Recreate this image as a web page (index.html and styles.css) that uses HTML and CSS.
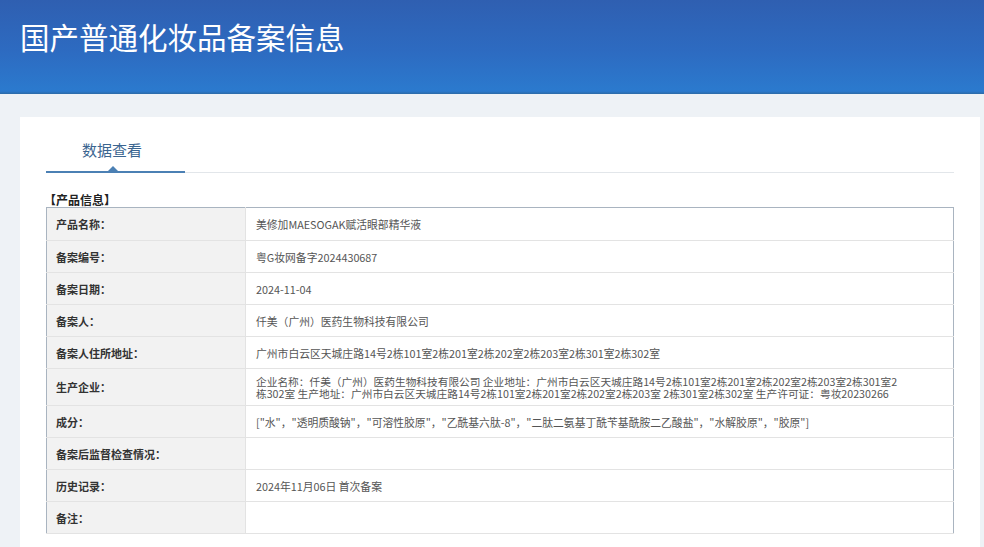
FILE: index.html
```html
<!DOCTYPE html>
<html lang="zh-CN">
<head>
<meta charset="utf-8">
<title>国产普通化妆品备案信息</title>
<link rel="stylesheet" href="styles.css">
</head>
<body>
<header class="banner">
  <h1 class="banner-title">国产普通化妆品备案信息</h1>
</header>
<main class="main">
  <section class="card">
    <div class="tabs">
      <div class="tab active">数据查看<span class="tab-arrow"></span></div>
      <div class="tab-rest"></div>
    </div>
    <h2 class="section-title">【产品信息】</h2>
    <table class="info">
      <tr class="first"><th>产品名称：</th><td>美修加MAESOGAK赋活眼部精华液</td></tr>
      <tr><th>备案编号：</th><td>粤G妆网备字2024430687</td></tr>
      <tr><th>备案日期：</th><td>2024-11-04</td></tr>
      <tr><th>备案人：</th><td>仟美（广州）医药生物科技有限公司</td></tr>
      <tr><th>备案人住所地址：</th><td>广州市白云区天城庄路14号2栋101室2栋201室2栋202室2栋203室2栋301室2栋302室</td></tr>
      <tr class="tall"><th>生产企业：</th><td class="tight">企业名称：仟美（广州）医药生物科技有限公司 企业地址：广州市白云区天城庄路14号2栋101室2栋201室2栋202室2栋203室2栋301室2<br>栋302室 生产地址：广州市白云区天城庄路14号2栋101室2栋201室2栋202室2栋203室 2栋301室2栋302室 生产许可证：粤妆20230266</td></tr>
      <tr><th>成分：</th><td>["水"，"透明质酸钠"，"可溶性胶原"，"乙酰基六肽-8"，"二肽二氨基丁酰苄基酰胺二乙酸盐"，"水解胶原"，"胶原"]</td></tr>
      <tr><th>备案后监督检查情况：</th><td></td></tr>
      <tr><th>历史记录：</th><td>2024年11月06日 首次备案</td></tr>
      <tr><th>备注：</th><td></td></tr>
    </table>
  </section>
</main>
</body>
</html>
```
FILE: styles.css
```css
* { box-sizing: border-box; }
html, body {
  margin: 0;
  padding: 0;
}
body {
  background: #eef2f6;
  font-family: "Noto Sans CJK SC", "Noto Sans", sans-serif;
  color: #333;
  overflow: hidden;
}
.banner {
  height: 94px;
  background: linear-gradient(180deg, #2f5fb1 0%, #2d6bc1 55%, #2b7ace 97%, #2c6aa6 100%);
  padding: 14px 0 0 20px;
}
.banner-title {
  margin: 0;
  font-size: 29.5px;
  font-weight: 400;
  line-height: 44px;
  color: #fff;
}
.main {
  padding: 23px 4px 0 20px;
}
.card {
  background: #fff;
  padding: 0 26px 14px 26px;
  height: 430px;
}
.tabs {
  display: flex;
  align-items: flex-end;
  padding-top: 22px;
}
.tab {
  position: relative;
  width: 139px;
  padding: 0 0 10px 36px;
  font-size: 15px;
  line-height: 22px;
  color: #3b6590;
  border-bottom: 2px solid #4b80b4;
}
.tab-arrow {
  position: absolute;
  left: 62px;
  bottom: 0;
  width: 0;
  height: 0;
  border-left: 5px solid transparent;
  border-right: 5px solid transparent;
  border-bottom: 5px solid #4b80b4;
}
.tab-rest {
  flex: 1;
  border-bottom: 1px solid #e2e6ea;
}
.section-title {
  margin: 19px 0 0 -2px;
  font-size: 12px;
  font-weight: 700;
  line-height: 15px;
  color: #222;
}
.info {
  width: 100%;
  border-collapse: collapse;
  border: 1px solid #a9b4c0;
  font-size: 11px;
}
.info tr {
  height: 32px;
}
.info tr.first {
  height: 33px;
}
.info tr.tall {
  height: 37px;
}
.info th {
  width: 199px;
  background: #f2f2f2;
  text-align: left;
  font-weight: 700;
  color: #333;
  padding: 0 0 0 9px;
  border-bottom: 1px solid #e3e3e3;
  border-right: 1px solid #e3e3e3;
}
.info td {
  padding: 0 0 0 10px;
  color: #555;
  font-size: 10.8px;
  border-bottom: 1px solid #e3e3e3;
  white-space: nowrap;
}
.info td.tight {
  font-size: 10.7px;
  line-height: 12px;
  padding-top: 1px;
}
```
